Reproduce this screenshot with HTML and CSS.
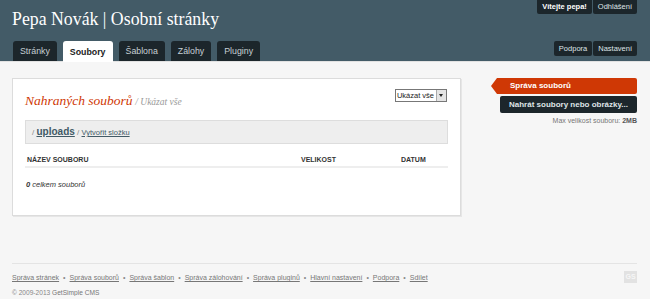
FILE: index.html
```html
<!DOCTYPE html>
<html lang="cs">
<head>
    <meta charset="UTF-8">
    <title>Soubory - Pepa Novák</title>
    <link rel="stylesheet" href="styles.css">
</head>
<body>

<header class="header">
    <div class="wrapper">
        <div class="header-top">
            <h1 class="site-name">Pepa Novák | Osobní stránky</h1>
            <div class="pill-nav">
                <a href="#">Vítejte pepa!</a>
                <a href="#">Odhlášení</a>
            </div>
        </div>
        <div class="header-bottom">
            <nav class="tabs">
                <a href="#">Stránky</a>
                <a href="#" class="current">Soubory</a>
                <a href="#">Šablona</a>
                <a href="#">Zálohy</a>
                <a href="#">Pluginy</a>
            </nav>
            <div class="pill-nav">
                <a href="#">Podpora</a>
                <a href="#">Nastavení</a>
            </div>
        </div>
    </div>
</header>

<div class="wrapper body">
    <div class="main">
        <div class="main-head">
            <h3><span class="title">Nahraných souborů</span> <span class="crumb">/ Ukázat vše</span></h3>
            <span class="filter">
                <span class="filter-value">Ukázat vše</span>
                <span class="filter-arrow"></span>
            </span>
        </div>
        <div class="path">
            <span class="sep">/</span> <a href="#" class="dir">uploads</a> <span class="sep">/</span> <a href="#" class="newdir">Vytvořit složku</a>
        </div>
        <table class="files">
            <tr>
                <th class="col-name">Název souboru</th>
                <th class="col-size">Velikost</th>
                <th class="col-date">Datum</th>
            </tr>
        </table>
        <p class="total"><b>0</b> celkem souborů</p>
    </div>

    <aside class="sidebar">
        <a href="#" class="side-current">Správa souborů</a>
        <a href="#" class="side-upload">Nahrát soubory nebo obrázky...</a>
        <p class="max-size">Max velikost souboru: <b>2MB</b></p>
    </aside>
</div>

<footer class="wrapper footer">
    <div class="footer-links">
        <a href="#">Správa stránek</a><span class="dot">&bull;</span><a href="#">Správa souborů</a><span class="dot">&bull;</span><a href="#">Správa šablon</a><span class="dot">&bull;</span><a href="#">Správa zálohování</a><span class="dot">&bull;</span><a href="#">Správa pluginů</a><span class="dot">&bull;</span><a href="#">Hlavní nastavení</a><span class="dot">&bull;</span><a href="#">Podpora</a><span class="dot">&bull;</span><a href="#">Sdílet</a>
        <span class="gs-logo">GS</span>
    </div>
    <p class="copy">&copy; 2009-2013 <a href="#">GetSimple CMS</a></p>
</footer>

</body>
</html>
```

FILE: styles.css
```css
body {
    margin: 0;
    background-color: #f6f6f6;
    font-family: 'Liberation Sans', Arial, sans-serif;
    color: #333;
    font-size: 9px;
}

a {
    color: #415A66;
}

.wrapper {
    width: 625px;
    margin: 0 0 0 12px;
}

.header {
    background-color: #435b67;
    height: 61px;
    border-bottom: 1px solid #e2e2e2;
}

.header .wrapper {
    height: 61px;
    display: flex;
    flex-direction: column;
    justify-content: space-between;
}

.header-top,
.header-bottom {
    display: flex;
    justify-content: space-between;
    align-items: flex-start;
}

.header-bottom {
    align-items: flex-end;
}

.site-name {
    font-family: 'Liberation Serif', Georgia, serif;
    font-weight: normal;
    font-size: 17.8px;
    color: #fff;
    margin: 9px 0 0 0;
}

.pill-nav {
    display: flex;
    gap: 1px;
}

.pill-nav a {
    background-color: #1c262b;
    color: #dfe4e7;
    text-decoration: none;
    font-size: 7.5px;
    padding: 2px 5px 3px;
    line-height: 9px;
    border-radius: 0 0 2px 2px;
}

.header-top .pill-nav a:first-child {
    font-weight: bold;
    color: #fff;
}

.header-bottom .pill-nav {
    margin-bottom: 5px;
}

.header-bottom .pill-nav a {
    border-radius: 2px;
    padding: 3px 5px 3px;
}

.tabs {
    display: flex;
    gap: 6px;
}

.tabs a {
    background-color: #1c262b;
    color: #c7d0d5;
    text-decoration: none;
    font-size: 8.8px;
    padding: 6px 7px 4px;
    line-height: 9px;
    border-radius: 3px 3px 0 0;
}

.tabs a:first-child {
    margin-left: 1px;
}

.tabs a.current {
    background-color: #fff;
    color: #222;
    font-weight: bold;
    padding-top: 7px;
    margin-bottom: -1px;
    padding-bottom: 5px;
}

.body {
    display: flex;
    justify-content: space-between;
    align-items: flex-start;
    margin-top: 16px;
}

.main {
    width: 423px;
    min-height: 136px;
    background-color: #fff;
    border: 1px solid #dcdcdc;
    box-shadow: 1px 1px 0 #e6e6e6;
    padding: 0 12px;
}

.main-head {
    display: flex;
    justify-content: space-between;
    align-items: flex-start;
    margin-top: 10px;
}

.main-head h3 {
    margin: 4px 0 0 0;
    font-weight: normal;
    font-family: 'Liberation Serif', Georgia, serif;
    font-style: italic;
}

.main-head .title {
    color: #CF3805;
    font-size: 13.5px;
}

.main-head .crumb {
    color: #999;
    font-size: 9.5px;
}

.filter {
    display: flex;
    align-items: stretch;
    height: 11px;
    border: 1px solid #777;
    background-color: #fff;
    color: #222;
    font-size: 7.5px;
    line-height: 11px;
    margin-right: 1px;
}

.filter-value {
    padding: 0 2px 0 1px;
}

.filter-arrow {
    position: relative;
    width: 9px;
    background-color: #e4e4e4;
    border-left: 1px solid #aaa;
}

.filter-arrow::after {
    content: "";
    position: absolute;
    left: 2px;
    top: 4px;
    border-style: solid;
    border-width: 3px 2.5px 0 2.5px;
    border-color: #222 transparent transparent transparent;
}

.path {
    margin-top: 11px;
    background-color: #eee;
    border: 1px solid #ddd;
    height: 22px;
    line-height: 22px;
    padding: 0 6px;
    font-size: 8px;
    color: #888;
}

.path .dir {
    font-weight: bold;
    font-size: 10px;
    color: #415A66;
}

.path .newdir {
    color: #415A66;
    font-size: 7.5px;
}

.files {
    width: 100%;
    border-collapse: collapse;
    margin-top: 7px;
}

.files th {
    text-align: left;
    text-transform: uppercase;
    font-size: 7px;
    color: #333;
    padding: 5px 2px 3px;
    border-bottom: 2px solid #eee;
}

.files .col-name {
    width: 270px;
}

.files .col-size {
    width: 96px;
}

.total {
    font-style: italic;
    font-size: 7.5px;
    margin: 12px 0 0 1px;
}

.sidebar {
    width: 146px;
    display: flex;
    flex-direction: column;
    align-items: flex-end;
}

.side-current {
    position: relative;
    box-sizing: border-box;
    width: 140px;
    height: 16px;
    line-height: 16px;
    background-color: #CF3805;
    color: #fff;
    font-weight: bold;
    font-size: 8px;
    text-decoration: none;
    padding-left: 13px;
    border-radius: 0 2px 2px 0;
}

.side-current::before {
    content: "";
    position: absolute;
    left: -6px;
    top: 0;
    border-style: solid;
    border-width: 8px 6px 8px 0;
    border-color: transparent #CF3805 transparent transparent;
}

.side-upload {
    box-sizing: border-box;
    width: 137px;
    height: 17px;
    line-height: 17px;
    margin-top: 2px;
    background-color: #1c262b;
    color: #dfe4e7;
    font-weight: bold;
    font-size: 8px;
    text-decoration: none;
    padding-left: 9px;
    border-radius: 2px;
}

.max-size {
    margin: 4px 0 0 0;
    font-size: 7px;
    color: #777;
}

.max-size b {
    color: #555;
}

.footer {
    margin-top: 47px;
    border-top: 1px solid #e4e4e4;
    padding-top: 8px;
    color: #888;
    font-size: 7px;
}

.footer a {
    color: #777;
}

.footer .dot {
    margin: 0 4px;
}

.footer-links {
    position: relative;
    line-height: 12px;
}

.gs-logo {
    position: absolute;
    right: 0;
    top: -1px;
    width: 13px;
    height: 12px;
    line-height: 12px;
    background-color: #e2e2e2;
    color: #f6f6f6;
    font-weight: bold;
    font-size: 7px;
    text-align: center;
}

.copy {
    margin: 5px 0 0 0;
    font-size: 6.6px;
}
```
